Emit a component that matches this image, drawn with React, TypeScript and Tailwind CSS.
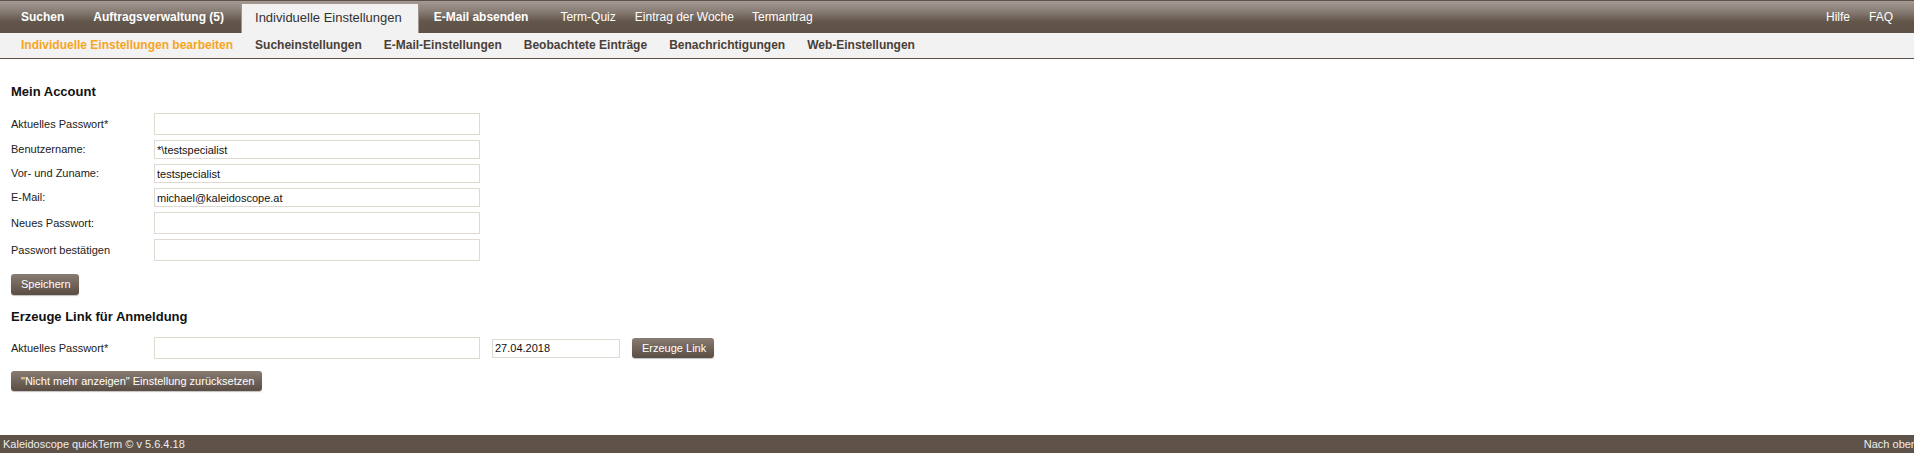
import React from "react";

const font = "font-['Liberation_Sans',Arial,sans-serif]";

function NavItem({ children, bold, className = "" }: { children: React.ReactNode; bold?: boolean; className?: string }) {
  return (
    <div className={`pt-[9px] text-[12px] leading-[15px] text-white whitespace-nowrap ${bold ? "font-bold" : ""} ${className}`}>
      {children}
    </div>
  );
}

function Row({ label, value, pw }: { label: string; value?: string; pw?: boolean }) {
  return (
    <div className="flex items-center">
      <div className="w-[143px] text-[11px] leading-[13px] text-[#222]">{label}</div>
      <input
        type="text"
        defaultValue={value ?? ""}
        className={`w-[326px] ${pw ? "h-[22px]" : "h-[19px]"} border border-[#e0d9d1] bg-white px-[2px] text-[11px] text-[#111] outline-none`}
      />
    </div>
  );
}

function Btn({ children, className = "" }: { children: React.ReactNode; className?: string }) {
  return (
    <button
      className={`rounded-[3px] bg-gradient-to-b from-[#897c73] to-[#5a4d44] px-[10px] text-[11px] leading-[13px] text-white shadow-[0_1px_1px_rgba(0,0,0,0.25)] whitespace-nowrap ${className}`}
    >
      {children}
    </button>
  );
}

export default function App() {
  return (
    <div className={`${font} w-[1914px] h-[453px] flex flex-col bg-white overflow-hidden`}>
      {/* top nav */}
      <div className="h-[33px] flex items-start border-t border-[#5e5248] bg-[linear-gradient(to_bottom,#a59b94_0%,#8a7f77_30%,#625549_65%,#5e5147_100%)] pl-[6px] pr-[21px]">
        <NavItem bold className="pl-[15px] pr-[14px]">Suchen</NavItem>
        <NavItem bold className="pl-[15px] pr-[17px]">Auftragsverwaltung (5)</NavItem>
        <div className="mt-[2px] h-[30px] pt-[6px] pl-[13px] pr-[16px] bg-[#f2f2f2] border border-b-0 border-[#a0968e] text-[13px] leading-[15px] text-[#333] whitespace-nowrap">
          Individuelle Einstellungen
        </div>
        <NavItem bold className="pl-[15px] pr-[16px]">E-Mail absenden</NavItem>
        <NavItem className="pl-[16px] pr-[9px]">Term-Quiz</NavItem>
        <NavItem className="pl-[10px] pr-[9px]">Eintrag der Woche</NavItem>
        <NavItem className="pl-[9px]">Termantrag</NavItem>
        <div className="flex-1" />
        <NavItem>Hilfe</NavItem>
        <NavItem className="pl-[19px]">FAQ</NavItem>
      </div>

      {/* sub nav */}
      <div className="h-[26px] flex items-center bg-[#f2f2f2] border-b border-[#5e5248] pl-[10px] text-[12px] font-bold leading-[15px] text-[#4a4038] whitespace-nowrap">
        <div className="px-[11px] text-[#f7a51e]">Individuelle Einstellungen bearbeiten</div>
        <div className="px-[11px]">Sucheinstellungen</div>
        <div className="px-[11px]">E-Mail-Einstellungen</div>
        <div className="px-[11px]">Beobachtete Einträge</div>
        <div className="px-[11px]">Benachrichtigungen</div>
        <div className="px-[11px]">Web-Einstellungen</div>
      </div>

      {/* content */}
      <div className="flex-1 pl-[11px] pt-[25px] flex flex-col items-start">
        <div className="text-[13px] font-bold leading-[15px] text-[#111]">Mein Account</div>
        <div className="mt-[14px] flex flex-col gap-[5px]">
          <Row label="Aktuelles Passwort*" pw />
          <Row label="Benutzername:" value="*\testspecialist" />
          <Row label="Vor- und Zuname:" value="testspecialist" />
          <Row label="E-Mail:" value="michael@kaleidoscope.at" />
          <Row label="Neues Passwort:" pw />
          <Row label="Passwort bestätigen" pw />
        </div>
        <Btn className="mt-[13px] h-[21px] w-[68px]">Speichern</Btn>
        <div className="mt-[14px] text-[13px] font-bold leading-[15px] text-[#111]">Erzeuge Link für Anmeldung</div>
        <div className="mt-[13px] flex items-center">
          <Row label="Aktuelles Passwort*" pw />
          <input
            type="text"
            defaultValue="27.04.2018"
            className="ml-[12px] w-[128px] h-[19px] border border-[#e0d9d1] bg-white px-[2px] text-[11px] text-[#111] outline-none"
          />
          <Btn className="ml-[12px] h-[20px] w-[82px]">Erzeuge Link</Btn>
        </div>
        <Btn className="mt-[12px] h-[20px] w-[251px]">"Nicht mehr anzeigen" Einstellung zurücksetzen</Btn>
      </div>

      {/* footer */}
      <div className="h-[18px] bg-[#5f5248] overflow-hidden">
        <div className="flex items-center h-full pl-[3px] mr-[-3px] text-[11px] leading-[13px] text-[#eeeeee] whitespace-nowrap">
          <div>Kaleidoscope quickTerm © v 5.6.4.18</div>
          <div className="flex-1" />
          <div>Nach oben</div>
        </div>
      </div>
    </div>
  );
}
